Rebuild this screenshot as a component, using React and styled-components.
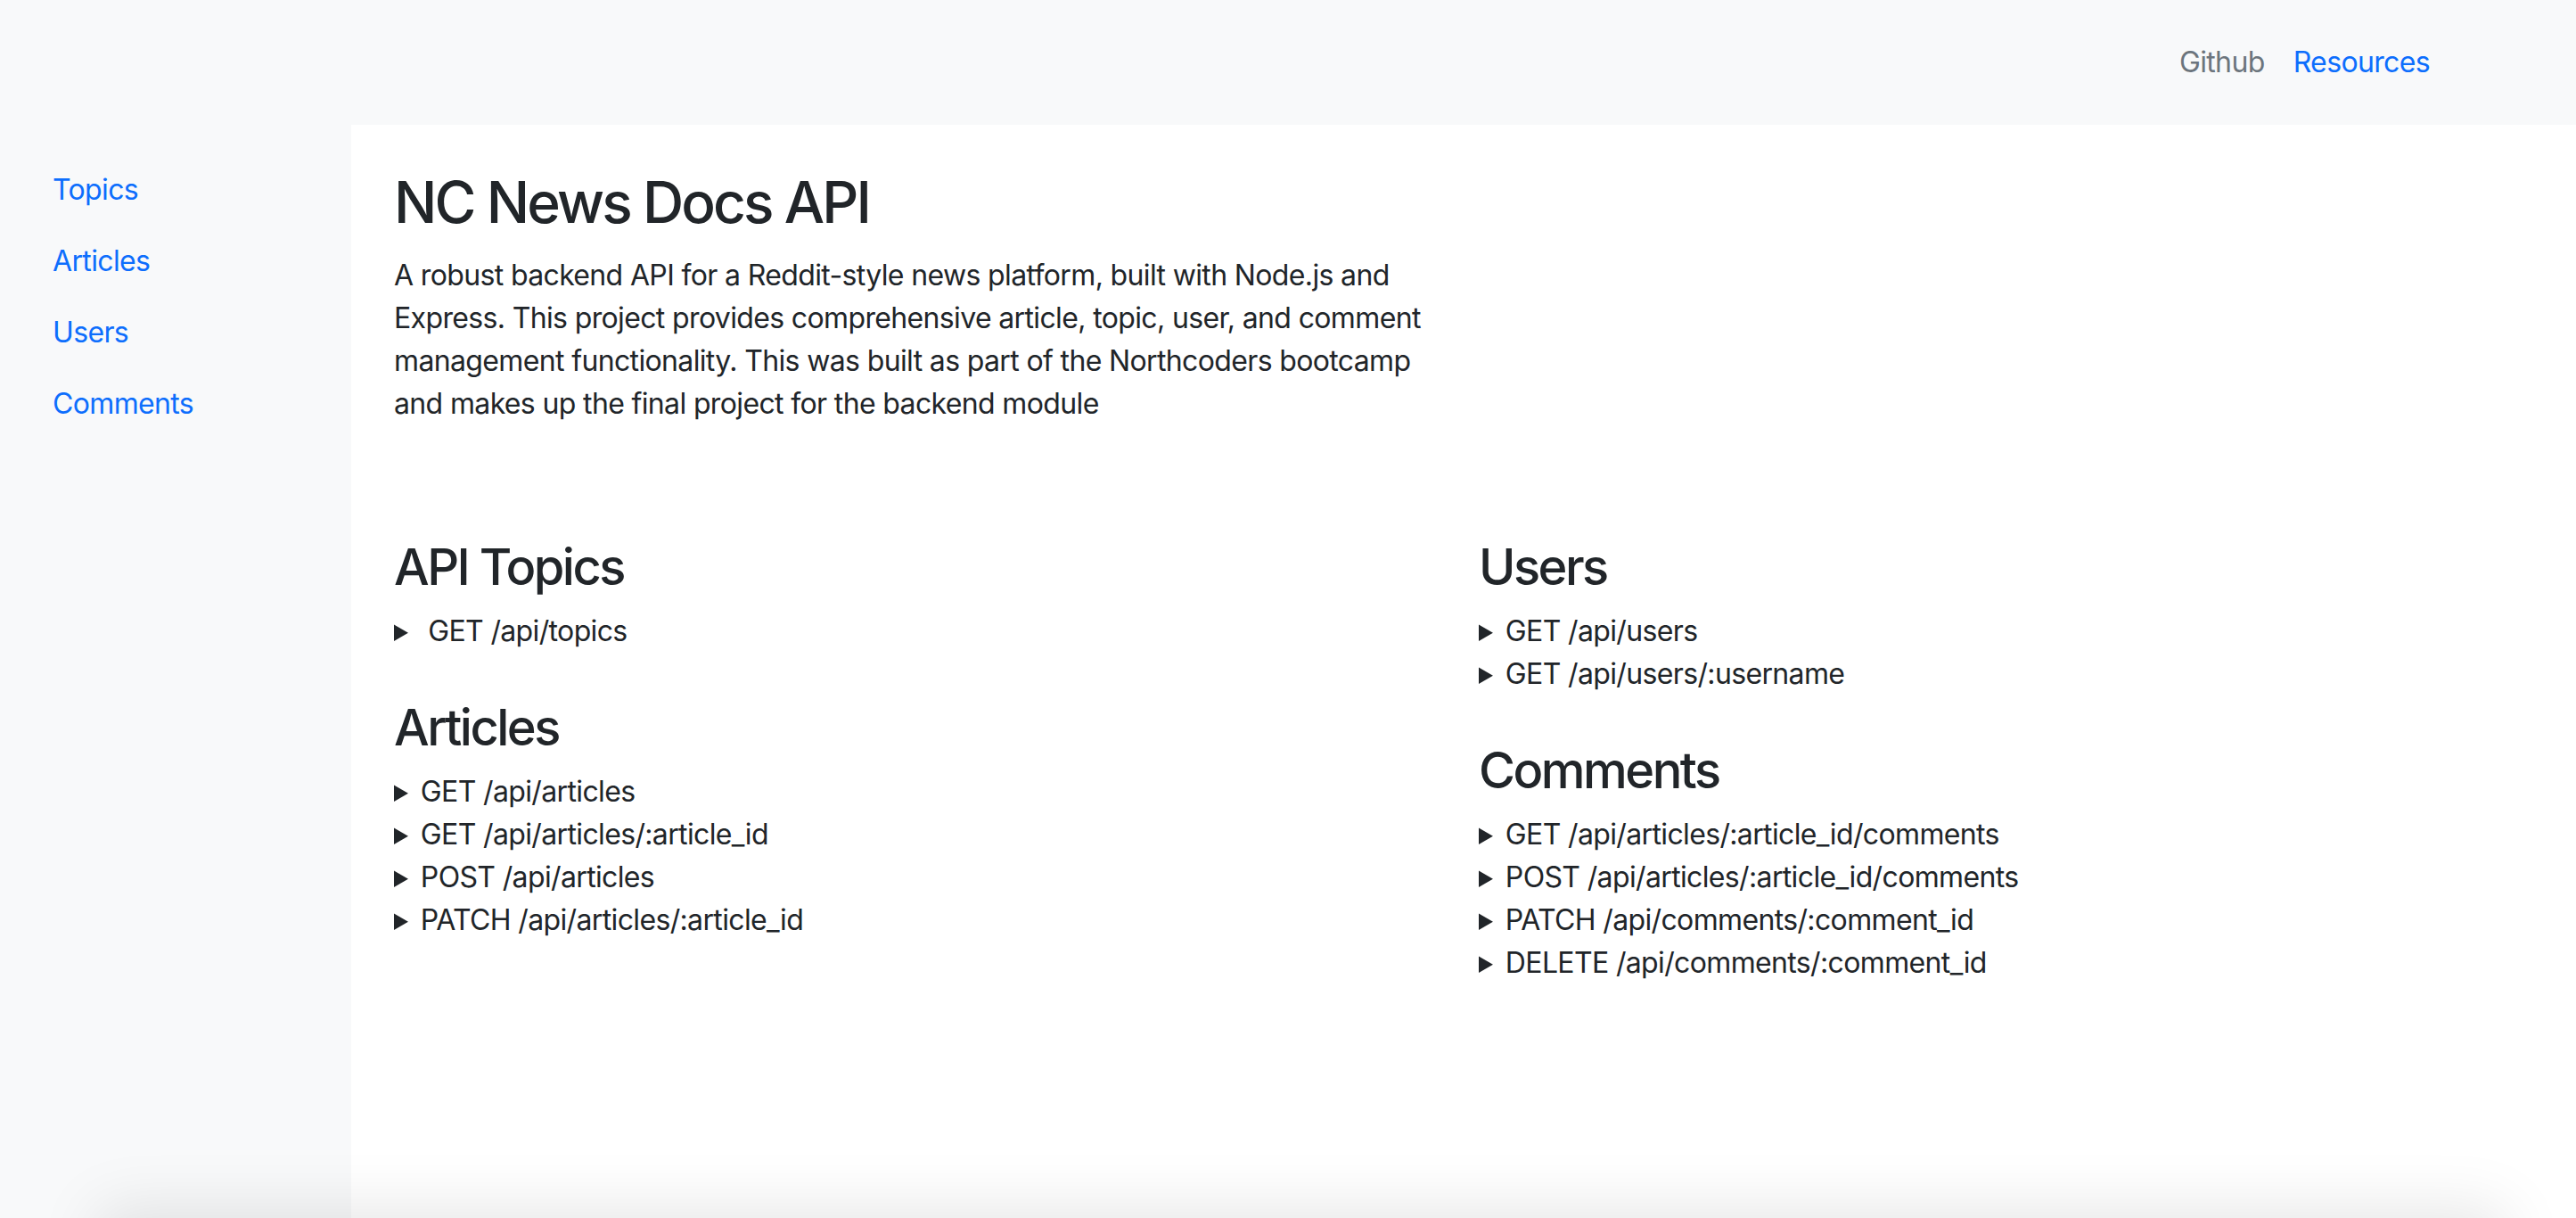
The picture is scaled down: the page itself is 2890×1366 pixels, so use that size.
import React from "react";
import styled, { createGlobalStyle } from "styled-components";

const Global = createGlobalStyle`
  * { box-sizing: border-box; }
  html, body { margin: 0; padding: 0; }
  body {
    font-family: Inter, "Noto Sans", "Liberation Sans", sans-serif;
    font-size: 32px;
    line-height: 1.5;
    letter-spacing: -0.02em;
    color: #212529;
    background: #ffffff;
  }
`;

const Page = styled.div`
  min-height: 100vh;
  display: flex;
  flex-direction: column;
  background: #f8f9fa;
`;

const TopBar = styled.header`
  height: 140px;
  display: flex;
  align-items: center;
  justify-content: flex-end;
  padding-right: 148px;
  background: #f8f9fa;
`;

const NavLink = styled.a`
  padding: 0 16px;
  font-size: 32px;
  line-height: 48px;
  text-decoration: none;
  color: ${(p) => (p.$active ? "#0d6efd" : "#6c757d")};
`;

const Body = styled.div`
  flex: 1;
  display: flex;
`;

const Sidebar = styled.nav`
  width: 394px;
  flex: none;
  background: #f8f9fa;
  padding: 49px 0 0 59px;
  display: flex;
  flex-direction: column;
  gap: 32px;
`;

const SideLink = styled.a`
  font-size: 32px;
  line-height: 48px;
  color: #0d6efd;
  text-decoration: none;
`;

const Main = styled.main`
  flex: 1;
  background: #ffffff;
  padding: 49px 38px 48px 48px;
`;

const Title = styled.h2`
  margin: 0 0 19px;
  font-size: 64px;
  line-height: 1.2;
  font-weight: 500;
  letter-spacing: -0.045em;
`;

const Intro = styled.p`
  margin: 0;
  width: 1180px;
  font-size: 32px;
  line-height: 48px;
`;

const Columns = styled.div`
  margin-top: 126px;
  display: grid;
  grid-template-columns: 1fr 1fr;
  column-gap: 24px;
  align-items: start;
`;

const Column = styled.div`
  display: flex;
  flex-direction: column;
  gap: 51px;
`;

const Section = styled.section``;

const SectionTitle = styled.h3`
  margin: 0 0 14px;
  font-size: 56px;
  line-height: 1.2;
  font-weight: 500;
  letter-spacing: -0.045em;
`;

const Endpoint = styled.details`
  font-size: 32px;
  line-height: 48px;
`;

const Summary = styled.summary`
  height: 48px;
  overflow: hidden;
  cursor: pointer;
  &::marker {
    font-size: 0.88em;
  }
`;

const BottomShade = styled.div`
  position: fixed;
  left: 120px;
  right: 90px;
  top: 100vh;
  height: 100px;
  box-shadow: 0 0 70px 10px rgba(0, 0, 0, 0.1);
  pointer-events: none;
`;

const left = [
  { title: "API Topics", items: [" GET /api/topics"] },
  {
    title: "Articles",
    items: [
      "GET /api/articles",
      "GET /api/articles/:article_id",
      "POST /api/articles",
      "PATCH /api/articles/:article_id",
    ],
  },
];

const right = [
  { title: "Users", items: ["GET /api/users", "GET /api/users/:username"] },
  {
    title: "Comments",
    items: [
      "GET /api/articles/:article_id/comments",
      "POST /api/articles/:article_id/comments",
      "PATCH /api/comments/:comment_id",
      "DELETE /api/comments/:comment_id",
    ],
  },
];

function Group({ sections }) {
  return (
    <Column>
      {sections.map((s) => (
        <Section key={s.title}>
          <SectionTitle>{s.title}</SectionTitle>
          {s.items.map((it) => (
            <Endpoint key={it}>
              <Summary>{it.startsWith(" ") ? "\u00a0" + it.slice(1) : it}</Summary>
            </Endpoint>
          ))}
        </Section>
      ))}
    </Column>
  );
}

export default function App() {
  return (
    <>
      <Global />
      <Page>
        <TopBar>
          <NavLink href="#">Github</NavLink>
          <NavLink href="#" $active>Resources</NavLink>
        </TopBar>
        <Body>
          <Sidebar>
            <SideLink href="#">Topics</SideLink>
            <SideLink href="#">Articles</SideLink>
            <SideLink href="#">Users</SideLink>
            <SideLink href="#">Comments</SideLink>
          </Sidebar>
          <Main>
            <Title>NC News Docs API</Title>
            <Intro>
              A robust backend API for a Reddit-style news platform, built with Node.js and
              Express. This project provides comprehensive article, topic, user, and comment
              management functionality. This was built as part of the Northcoders bootcamp
              and makes up the final project for the backend module
            </Intro>
            <Columns>
              <Group sections={left} />
              <Group sections={right} />
            </Columns>
          </Main>
        </Body>
      </Page>
      <BottomShade />
    </>
  );
}
